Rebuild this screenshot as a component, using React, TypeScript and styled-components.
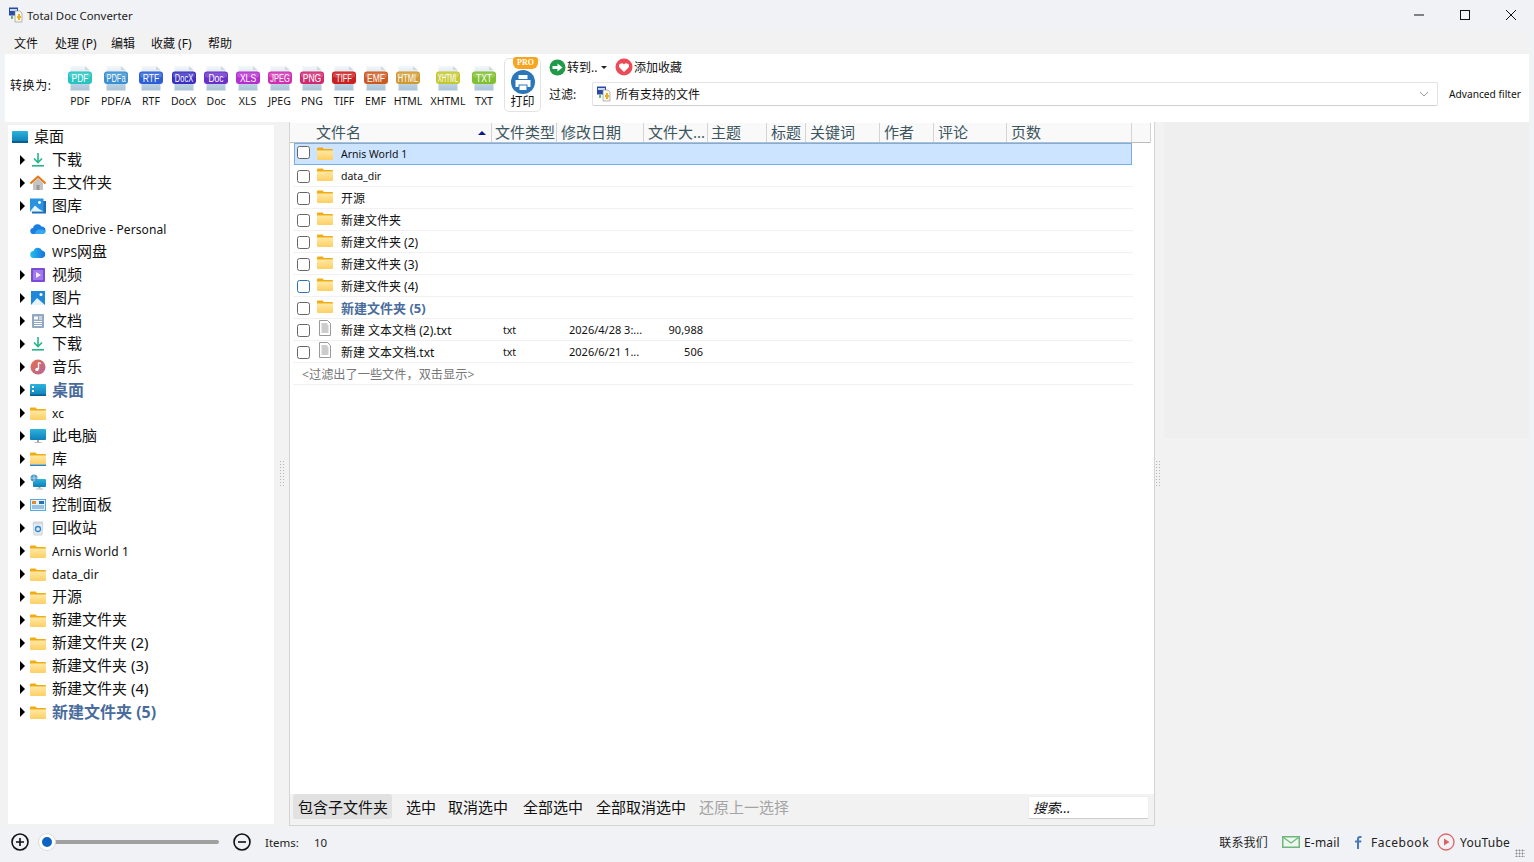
import React from "react";
import styled, { createGlobalStyle } from "styled-components";

const UI = `"Noto Sans", "Noto Sans CJK SC", sans-serif`;

const Global = createGlobalStyle`
  html, body { margin: 0; padding: 0; height: 100%; background: #f1f2f5; overflow: hidden; }
  body { font-family: ${UI}; color: #111; }
  * { box-sizing: border-box; }
`;

const Win = styled.div`
  width: 1534px; height: 862px; display: flex; flex-direction: column; background: #f1f2f5; overflow: hidden;
`;
const TitleBar = styled.div`
  height: 30px; flex: none; display: flex; align-items: center; padding-left: 9px;
`;
const TitleText = styled.span`
  font-size: 11.4px; color: #222; margin-left: 4px; white-space: nowrap;
`;
const WinButtons = styled.div`
  margin-left: auto; display: flex; align-items: center; height: 30px;
`;
const WinButton = styled.div`
  width: 46px; height: 30px; display: flex; align-items: center; justify-content: center;
`;
const MenuBar = styled.div`
  height: 24px; flex: none; margin-right: 5px; background: #f2f2f2; display: flex; align-items: center; padding: 2px 0 0 14px;
`;
const MenuItem = styled.span<{ $w: number }>`
  width: ${p => p.$w}px; font-size: 12px; color: #111; white-space: nowrap;
`;
const ToolBar = styled.div`
  height: 68px; flex: none; margin: 0 5px; background: #fff; display: flex; align-items: stretch; padding-left: 5px;
`;
const ConvertLabel = styled.div`
  width: 52px; font-size: 12px; letter-spacing: 0.6px; align-self: center; margin-bottom: 6px; white-space: nowrap; color: #111;
`;
const FormatButton = styled.div<{ $w: number }>`
  width: ${p => p.$w}px; display: flex; flex-direction: column; align-items: center; padding-top: 12px; flex: none;
`;
const FormatLabel = styled.span`
  font-size: 10.5px; line-height: 14px; margin-top: 3px; color: #151515; white-space: nowrap;
`;
const PrintButton = styled.div`
  position: relative; width: 37px; height: 54px; margin: 4px 0 0 6px; border: 1px solid #e3e3e3; border-radius: 5px;
  display: flex; flex-direction: column; align-items: center; padding-top: 11px; flex: none;
`;
const ProBadge = styled.span`
  position: absolute; top: -2px; right: 2px; width: 25px; height: 12px; border-radius: 3px 3px 6px 6px; background: #f7a520;
  color: #fff; font: bold 8px/12px "Liberation Serif", serif; text-align: center;
`;
const PrintLabel = styled.span`
  font-size: 12px; line-height: 15px; color: #111;
`;
const ToolRight = styled.div`
  flex: 1; display: flex; flex-direction: column; padding-left: 8px; min-width: 0;
`;
const ToolTop = styled.div`
  height: 26px; margin-bottom: 2px; display: flex; align-items: center; flex: none;
`;
const TopAction = styled.span<{ $w: number }>`
  width: ${p => p.$w}px; display: flex; align-items: center; gap: 1px; font-size: 12px; color: #111; white-space: nowrap;
`;
const Caret = styled.i`
  width: 0; height: 0; border-left: 3px solid transparent; border-right: 3px solid transparent; border-top: 3px solid #222; margin-left: 3px;
`;
const FilterRow = styled.div`
  display: flex; align-items: center; height: 24px;
`;
const FilterLabel = styled.span`
  width: 43px; font-size: 12px; color: #111; flex: none;
`;
const Combo = styled.div`
  width: 846px; height: 24px; display: flex; align-items: center; padding: 0 8px 0 4px; border: 1px solid #e3e3e3;
  border-bottom: 1px solid #cfcfcf; border-radius: 2px; font-size: 12px; gap: 5px; flex: none;
`;
const ComboArrow = styled.span`
  margin-left: auto; display: flex;
`;
const AdvFilter = styled.span`
  font-size: 10.2px; margin: -1px 0 0 11px; color: #111; white-space: nowrap;
`;

const Body = styled.div`
  height: 704px; flex: none; display: flex; margin-right: 5px; background: #f2f2f2;
`;
const Tree = styled.div`
  width: 266px; margin: 3px 0 2px 8px; background: #fff; flex: none;
`;
const TreeRow = styled.div<{ $root?: boolean }>`
  height: 23px; display: flex; align-items: center; padding-left: ${p => (p.$root ? 4 : 12)}px;
`;
const Arrow = styled.i<{ $show: boolean }>`
  width: 0; height: 0; flex: none; margin-right: 5px;
  border-top: 5px solid transparent; border-bottom: 5px solid transparent;
  border-left: 5px solid ${p => (p.$show ? "#000" : "transparent")};
`;
const TreeLabel = styled.span<{ $bold?: boolean; $latin?: boolean }>`
  margin: ${p => (p.$latin ? "2px 0 0 6px" : "-2px 0 0 6px")}; white-space: nowrap;
  font-size: ${p => (p.$latin ? 12 : p.$bold ? 16 : 15)}px;
  letter-spacing: ${p => (p.$latin ? 0.1 : 0)}px;
  font-weight: ${p => (p.$bold ? 700 : 400)};
  color: ${p => (p.$bold ? "#4a6c9c" : "#111")};
`;
const SmallLatin = styled.span`
  font-size: 12px;
`;
const Splitter = styled.div<{ $w: number; $start?: boolean }>`
  width: ${p => p.$w}px; flex: none; display: flex; align-items: flex-start;
  justify-content: ${p => (p.$start ? "flex-start" : "center")}; padding-top: 338px;
`;
const Grip = styled.div`
  width: 5px; height: 26px;
  background-image: radial-gradient(#b4b4b4 0.8px, transparent 1px);
  background-size: 3px 3px;
`;
const ListPanel = styled.div`
  width: 866px; height: 704px; flex: none; border: 1px solid #d4d4d4; border-top: none; display: flex; flex-direction: column; background: #fff;
`;
const HeaderRow = styled.div`
  height: 20px; flex: none; display: flex; background: #f9f9f9; margin-right: 3px; border-bottom: 1px solid #bdbdbd; border-right: 1px solid #d4d4d4; margin-top: 1px;
`;
const HeaderCell = styled.div<{ $w: number; $pad?: number }>`
  width: ${p => p.$w}px; flex: none; position: relative; height: 19px; display: flex; align-items: center;
  padding: 0 0 2px ${p => p.$pad ?? 4}px; font-size: 15px; color: #3c5660; white-space: nowrap; overflow: hidden;
  border-right: 1px solid #d4d4d4;
`;
const SortMark = styled.i`
  position: absolute; right: 5px; top: 8px; width: 0; height: 0;
  border-left: 4px solid transparent; border-right: 4px solid transparent; border-bottom: 4px solid #0a1a80;
`;
const Rows = styled.div`
  flex: 1; padding: 0 0 0 3px; min-height: 0; width: 843px;
`;
const FileRow = styled.div<{ $sel?: boolean }>`
  height: 22px; display: flex; align-items: center; font-size: 11px; color: #111;
  border-bottom: 1px solid ${p => (p.$sel ? "#76aee8" : "#f1f1f1")};
  ${p => p.$sel && "background: #cce4ff; border-top: 1px solid #76aee8; border-left: 1px solid #76aee8; border-right: 1px solid #76aee8; margin: 0 1px;"}
  padding-left: ${p => (p.$sel ? 2 : 4)}px;
`;
const Check = styled.i<{ $focus?: boolean; $top?: number }>`
  width: 13px; height: 13px; flex: none; border: 1px solid ${p => (p.$focus ? "#2e6fb5" : "#666")}; border-radius: 2.5px; background: #fff;
  margin-top: ${p => p.$top ?? 1}px;
`;
const IconSlot = styled.span`
  width: 16px; height: 16px; flex: none; margin: -3px 0 0 7px; display: flex;
`;
const NameCell = styled.span<{ $bold?: boolean; $small?: boolean }>`
  width: 162px; margin-left: 8px; flex: none; white-space: nowrap;
  font-size: ${p => (p.$small ? 10.5 : p.$bold ? 13 : 12)}px;
  font-weight: ${p => (p.$bold ? 700 : 400)};
  color: ${p => (p.$bold ? "#4a6c9c" : "#111")};
`;
const TypeCell = styled.span`
  width: 66px; flex: none; font-size: 10.5px;
`;
const DateCell = styled.span`
  width: 84px; flex: none; font-size: 11px; white-space: nowrap;
`;
const SizeCell = styled.span`
  width: 50px; flex: none; text-align: right; font-size: 11px;
`;
const FilteredNote = styled.div`
  height: 22px; display: flex; align-items: center; padding-left: 9px; font-size: 12.2px; color: #777; border-bottom: 1px solid #f1f1f1;
`;
const ListTools = styled.div`
  height: 31px; flex: none; display: flex; align-items: center; background: #f2f2f2; padding: 0 5px 6px 3px;
`;
const ToolBtn = styled.span<{ $w: number; $on?: boolean; $off?: boolean }>`
  width: ${p => p.$w}px; height: 25px; flex: none; display: flex; align-items: center; font-size: 15px; white-space: nowrap;
  color: ${p => (p.$off ? "#a4a4a4" : "#111")};
  border-radius: 3px;
  ${p => (p.$on ? "background: #e1e1e1; padding-left: 5px;" : "")}
`;
const Search = styled.div`
  margin: 2px 0 0 auto; width: 121px; height: 23px; background: #fff; border: 1px solid #eee; border-bottom: 1px solid #ccc; border-radius: 2px;
  font-size: 13.5px; font-style: italic; color: #111; display: flex; align-items: center; padding: 0 0 2px 4px;
`;
const Preview = styled.div`
  flex: 1; height: 316px; background: #efefef;
`;
const StatusBar = styled.div`
  flex: 1; display: flex; align-items: center; padding: 0 0 4px 11px; position: relative; font-size: 12px; color: #222;
`;
const SliderTrack = styled.div`
  width: 179px; height: 4px; background: #a0a0a0; border-radius: 2px; margin: 0 14px 0 11px; position: relative;
`;
const Knob = styled.i`
  position: absolute; left: -1px; top: -6px; width: 16px; height: 16px; border-radius: 50%; background: #0a64c4; border: 3px solid #fff; box-shadow: 0 0 0 1px #dcdcdc;
`;
const ItemsLabel = styled.span`
  margin-left: 14px; width: 49px; font-size: 11.5px;
`;
const ItemsCount = styled.span`
  font-size: 11.5px;
`;
const Contacts = styled.div`
  margin-left: auto; display: flex; align-items: center; padding-right: 24px; font-size: 12px; color: #222;
`;
const ContactText = styled.span<{ $ml: number; $ls?: number }>`
  margin-left: ${p => p.$ml}px; white-space: nowrap; letter-spacing: ${p => p.$ls ?? 0.2}px;
`;
const ResizeGrip = styled.div`
  position: absolute; right: 9px; bottom: 5px; width: 10px; height: 8px;
  background-image: radial-gradient(#8c8c8c 0.9px, transparent 1.1px); background-size: 3px 3px;
`;
const ContactIcon = styled.svg<{ $ml: number }>`
  margin-left: ${p => p.$ml}px; flex: none;
`;

const GradDefs = () => (
  <svg width="0" height="0" style={{ position: "absolute" }}>
    <defs>
      <linearGradient id="fold" x1="0" y1="0" x2="0" y2="1"><stop offset="0" stopColor="#ffe9a6" /><stop offset="1" stopColor="#fdcf62" /></linearGradient>
      <linearGradient id="blue" x1="0" y1="0" x2="0" y2="1"><stop offset="0" stopColor="#2bb3dd" /><stop offset="1" stopColor="#0e7fb8" /></linearGradient>
      <linearGradient id="page" x1="0" y1="0" x2="0" y2="1"><stop offset="0" stopColor="#f4f7fa" /><stop offset="1" stopColor="#a9c4d8" /></linearGradient>
      <linearGradient id="music" x1="0" y1="0" x2="1" y2="1"><stop offset="0" stopColor="#e8714a" /><stop offset="1" stopColor="#b2649c" /></linearGradient>
      <linearGradient id="cloud" x1="0" y1="0" x2="1" y2="0"><stop offset="0" stopColor="#22c0e8" /><stop offset="1" stopColor="#1a6fe0" /></linearGradient>
    </defs>
  </svg>
);

type Kind = "desktop" | "desktop2" | "down" | "home" | "gallery" | "one" | "wps" | "video" | "pic" | "doc" | "music" | "folder" | "pc" | "lib" | "net" | "cp" | "bin" | "txt";

const Ico = ({ k }: { k: Kind }) => {
  const s = { width: 16, height: 16, viewBox: "0 0 16 16" } as const;
  switch (k) {
    case "folder":
      return <svg {...s}><path d="M0 3.5a1 1 0 0 1 1-1h4.5l1.5 1.5h8a1 1 0 0 1 1 1v1H0z" fill="#f0ac14" /><path d="M0 5.5h16v8.5a1 1 0 0 1-1 1H1a1 1 0 0 1-1-1z" fill="url(#fold)" /></svg>;
    case "lib":
      return <svg {...s}><path d="M0 2.5a1 1 0 0 1 1-1h4.5L7 3h8a1 1 0 0 1 1 1v1H0z" fill="#f0ac14" /><path d="M0 4.5h16v9H0z" fill="url(#fold)" /><rect y="13.5" width="16" height="1.5" fill="#2a86c8" /></svg>;
    case "desktop":
      return <svg {...s}><rect y="2" width="16" height="11" rx="1" fill="url(#blue)" /><rect y="12" width="16" height="2" fill="#0b5f8e" /></svg>;
    case "desktop2":
      return <svg {...s}><rect y="2" width="16" height="12" rx="1" fill="url(#blue)" /><rect y="12.5" width="16" height="1.5" fill="#0b5f8e" /><rect x="2" y="4" width="2" height="2" fill="#fff" /><rect x="2" y="8" width="2" height="2" fill="#fff" /></svg>;
    case "down":
      return <svg {...s}><path d="M8 1v9M4 6.5 8 10.5 12 6.5" stroke="#26b58c" strokeWidth="1.6" fill="none" /><rect x="2" y="13" width="12" height="1.6" fill="#26b58c" /></svg>;
    case "home":
      return <svg {...s}><path d="M3 8v7h10V8L8 3z" fill="#c4c4c4" /><rect x="6.5" y="10" width="3" height="5" fill="#999" /><path d="M0.5 8.5 8 1.5l7.5 7" stroke="#e87512" strokeWidth="2" fill="none" /></svg>;
    case "gallery":
      return <svg {...s}><rect x="2" y="3" width="14" height="12.5" fill="#1f6db3" /><rect x="0" y="0.5" width="13.5" height="13" fill="#2a93e0" /><path d="M0 13.5 5 7.5l4 3.5 4.5 2.5z" fill="#e6f3fc" /><circle cx="9.5" cy="4.5" r="1.4" fill="#fff" /></svg>;
    case "pic":
      return <svg {...s}><rect x="1" y="1" width="14" height="14" fill="#1f88d8" /><path d="M1 15 7 8l8 7z" fill="#e8f4fc" /><circle cx="11" cy="4.5" r="1.5" fill="#fff" /></svg>;
    case "one":
      return <svg {...s}><path d="M3.5 13a3 3 0 0 1-.4-6 4.5 4.5 0 0 1 8.4-1.5A3.8 3.8 0 0 1 15.5 9.5 3.5 3.5 0 0 1 12.5 13z" fill="#1b7ee0" /><path d="M5 13c0-3 3-5 6-4.5s5 1.5 4.5 2.5-1.5 2-3 2z" fill="#37a8ee" /></svg>;
    case "wps":
      return <svg {...s}><path d="M4 14a3.5 3.5 0 0 1-.5-7 4.5 4.5 0 0 1 8.5-.5A3.8 3.8 0 0 1 12 14z" fill="url(#cloud)" /></svg>;
    case "video":
      return <svg {...s}><rect x="1" y="1" width="14" height="14" rx="1" fill="#7a4ad8" /><rect x="3" y="3" width="10" height="10" fill="#a07ae8" /><path d="M6 5v6l5-3z" fill="#f2ecff" /></svg>;
    case "doc":
      return <svg {...s}><rect x="2" y="1" width="12" height="14" rx="1" fill="#90a8c4" /><rect x="4" y="3.5" width="4" height="3" fill="#fff" /><path d="M9 4h3M9 6h3M4 8.5h8M4 10.5h8M4 12.5h8" stroke="#fff" strokeWidth="1" /></svg>;
    case "music":
      return <svg {...s}><circle cx="8" cy="8" r="7.5" fill="url(#music)" /><path d="M8.5 3.5v6.5M8.5 3.5l2.5 1" stroke="#fff" strokeWidth="1.3" fill="none" /><circle cx="7" cy="10.5" r="1.7" fill="#fff" /></svg>;
    case "pc":
      return <svg {...s}><rect x="0" y="1" width="16" height="11" rx="1" fill="url(#blue)" /><rect x="7" y="12" width="2" height="2" fill="#9aa" /><rect x="4.5" y="14" width="7" height="1" fill="#bbb" /></svg>;
    case "net":
      return <svg {...s}><rect x="3" y="5" width="13" height="8" rx="1" fill="url(#blue)" /><rect x="8.5" y="13" width="2" height="1.5" fill="#9aa" /><rect x="6" y="14.5" width="7" height="1" fill="#bbb" /><circle cx="4" cy="4" r="3.5" fill="#4a94c8" /><path d="M.5 4h7M4 .5v7" stroke="#d8ecf8" strokeWidth=".7" /></svg>;
    case "cp":
      return <svg {...s}><rect x="0" y="2" width="16" height="12" fill="#5aa8de" /><rect x="1" y="3" width="14" height="10" fill="#e4f2fb" /><rect x="2" y="4" width="4" height="3" fill="#e88a20" /><rect x="9" y="4" width="5" height="3" fill="#2a6fb0" /><path d="M2 9h12M2 11h12" stroke="#4a90c8" strokeWidth="1" /></svg>;
    case "bin":
      return <svg {...s}><path d="M3 3h10l-1 12H4z" fill="#e4e9ee" stroke="#c0c8d0" strokeWidth=".7" /><rect x="3" y="1.5" width="10" height="2" fill="#cfd6dc" /><circle cx="8" cy="9" r="2.5" fill="none" stroke="#2a8ad8" strokeWidth="1.3" /></svg>;
    case "txt":
      return <svg {...s}><path d="M2.5.5h8l3 3v12h-11z" fill="#fff" stroke="#9a9a9a" /><path d="M4.5 4h6M4.5 6h7M4.5 8h7M4.5 10h7M4.5 12h7" stroke="#9a9a9a" strokeWidth="1" /></svg>;
  }
};

const AppGlyph = () => (
  <svg width="14" height="16" viewBox="0 0 14 16" style={{ flex: "none" }}>
    <rect x="0" y="0.5" width="9" height="8" fill="#2a4aa8" />
    <rect x="1" y="2" width="7" height="2" fill="#c6d8f4" />
    <path d="M6 4h5l2 2v9H6z" fill="#f7f7ee" stroke="#8a8a80" strokeWidth=".6" />
    <path d="M10 7v6M8 10h4" stroke="#e8b020" strokeWidth="2" />
    <path d="M3 9v3" stroke="#2a9a4a" strokeWidth="1.4" />
  </svg>
);

const FormatIcon = ({ band, color }: { band: string; color: string }) => {
  const sx = band.length >= 5 ? 0.55 : band.length === 4 ? 0.68 : 0.78;
  return (
    <svg width="26" height="25" viewBox="0 0 26 25">
      <path d="M3.5 0h14.5l4.5 4v20.5h-19z" fill="url(#page)" />
      <path d="M18 0v4h4.5z" fill="#cfd9e2" />
      <rect x="1" y="5.5" width="24" height="12.5" rx="3" fill={color} />
      <rect x="2" y="6.5" width="22" height="5" rx="2" fill="#fff" opacity=".18" />
      <text transform={`translate(13 15.8) scale(${sx} 1)`} textAnchor="middle" fontFamily='"Liberation Sans", sans-serif' fontSize="11" fill="#fff">{band}</text>
    </svg>
  );
};

const formats = [
  { l: "PDF", b: "PDF", c: "#28c4c2", w: 36 }, { l: "PDF/A", b: "PDFa", c: "#3a90d0", w: 36 },
  { l: "RTF", b: "RTF", c: "#2b5fd6", w: 34 }, { l: "DocX", b: "DocX", c: "#3a2fc0", w: 31 },
  { l: "Doc", b: "Doc", c: "#6a30c8", w: 34 }, { l: "XLS", b: "XLS", c: "#b52fd0", w: 29 },
  { l: "JPEG", b: "JPEG", c: "#d030b0", w: 35 }, { l: "PNG", b: "PNG", c: "#d02a70", w: 30 },
  { l: "TIFF", b: "TIFF", c: "#cc2020", w: 34 }, { l: "EMF", b: "EMF", c: "#cc5a20", w: 29 },
  { l: "HTML", b: "HTML", c: "#d09a30", w: 36 }, { l: "XHTML", b: "XHTML", c: "#c4c830", w: 44 },
  { l: "TXT", b: "TXT", c: "#80c030", w: 28 },
];

const treeItems: { t: React.ReactNode; k: Kind; a?: boolean; bold?: boolean; latin?: boolean }[] = [
  { t: "下载", k: "down", a: true }, { t: "主文件夹", k: "home", a: true }, { t: "图库", k: "gallery", a: true },
  { t: "OneDrive - Personal", k: "one", latin: true }, { t: <><SmallLatin>WPS</SmallLatin>网盘</>, k: "wps" },
  { t: "视频", k: "video", a: true }, { t: "图片", k: "pic", a: true }, { t: "文档", k: "doc", a: true },
  { t: "下载", k: "down", a: true }, { t: "音乐", k: "music", a: true }, { t: "桌面", k: "desktop2", a: true, bold: true },
  { t: "xc", k: "folder", a: true, latin: true }, { t: "此电脑", k: "pc", a: true }, { t: "库", k: "lib", a: true },
  { t: "网络", k: "net", a: true }, { t: "控制面板", k: "cp", a: true }, { t: "回收站", k: "bin", a: true },
  { t: "Arnis World 1", k: "folder", a: true, latin: true }, { t: "data_dir", k: "folder", a: true, latin: true },
  { t: "开源", k: "folder", a: true }, { t: "新建文件夹", k: "folder", a: true }, { t: "新建文件夹 (2)", k: "folder", a: true },
  { t: "新建文件夹 (3)", k: "folder", a: true }, { t: "新建文件夹 (4)", k: "folder", a: true },
  { t: "新建文件夹 (5)", k: "folder", a: true, bold: true },
];

const cols: { t: string; w: number; pad?: number }[] = [
  { t: "文件类型", w: 65, pad: 3 }, { t: "修改日期", w: 87 }, { t: "文件大...", w: 64 }, { t: "主题", w: 59, pad: 3 },
  { t: "标题", w: 39 }, { t: "关键词", w: 74 }, { t: "作者", w: 54 }, { t: "评论", w: 73 }, { t: "页数", w: 125 },
];

const files: { n: string; k: Kind; sel?: boolean; small?: boolean; focus?: boolean; bold?: boolean; ty?: string; d?: string; s?: string }[] = [
  { n: "Arnis World 1", k: "folder", sel: true, small: true },
  { n: "data_dir", k: "folder", small: true },
  { n: "开源", k: "folder" },
  { n: "新建文件夹", k: "folder" },
  { n: "新建文件夹 (2)", k: "folder" },
  { n: "新建文件夹 (3)", k: "folder" },
  { n: "新建文件夹 (4)", k: "folder", focus: true },
  { n: "新建文件夹 (5)", k: "folder", bold: true },
  { n: "新建 文本文档 (2).txt", k: "txt", ty: "txt", d: "2026/4/28 3:...", s: "90,988" },
  { n: "新建 文本文档.txt", k: "txt", ty: "txt", d: "2026/6/21 1...", s: "506" },
];

const tools = [
  { t: "选中", w: 42 }, { t: "取消选中", w: 75 }, { t: "全部选中", w: 73 }, { t: "全部取消选中", w: 103 },
];

export default function App() {
  return (
    <Win>
      <Global />
      <GradDefs />
      <TitleBar>
        <AppGlyph />
        <TitleText>Total Doc Converter</TitleText>
        <WinButtons>
          <WinButton><svg width="10" height="10" viewBox="0 0 10 10"><path d="M0 5h10" stroke="#111" /></svg></WinButton>
          <WinButton><svg width="10" height="10" viewBox="0 0 10 10"><rect x=".5" y=".5" width="9" height="9" fill="none" stroke="#111" /></svg></WinButton>
          <WinButton><svg width="10" height="10" viewBox="0 0 10 10"><path d="M0 0l10 10M10 0 0 10" stroke="#111" /></svg></WinButton>
        </WinButtons>
      </TitleBar>
      <MenuBar>
        <MenuItem $w={41}>文件</MenuItem>
        <MenuItem $w={56}>处理 (P)</MenuItem>
        <MenuItem $w={40}>编辑</MenuItem>
        <MenuItem $w={57}>收藏 (F)</MenuItem>
        <MenuItem $w={30}>帮助</MenuItem>
      </MenuBar>
      <ToolBar>
        <ConvertLabel>转换为:</ConvertLabel>
        {formats.map(f => (
          <FormatButton key={f.l} $w={f.w}>
            <FormatIcon band={f.b} color={f.c} />
            <FormatLabel>{f.l}</FormatLabel>
          </FormatButton>
        ))}
        <PrintButton>
          <ProBadge>PRO</ProBadge>
          <svg width="24" height="24" viewBox="0 0 24 24">
            <circle cx="12" cy="12" r="12" fill="#2a76b8" />
            <path d="M7.5 5h9v4h-9z" fill="#fff" />
            <path d="M4.5 10h15v7h-3v-2.5h-9V17h-3z" fill="#fff" />
            <rect x="8.5" y="15.5" width="7" height="4.5" fill="#fff" />
          </svg>
          <PrintLabel>打印</PrintLabel>
        </PrintButton>
        <ToolRight>
          <ToolTop>
            <TopAction $w={66}>
              <svg width="17" height="17" viewBox="0 0 17 17"><circle cx="8.5" cy="8.5" r="8" fill="#1f9a48" /><path d="M3.5 7h5V4.5l5 4-5 4V10h-5z" fill="#fff" /></svg>
              转到..<Caret />
            </TopAction>
            <TopAction $w={80}>
              <svg width="18" height="18" viewBox="0 0 18 18"><circle cx="9" cy="9" r="8.5" fill="#ec4a58" /><path d="M9 14 4.5 9.5a2.6 2.6 0 0 1 4.5-3 2.6 2.6 0 0 1 4.5 3z" fill="#fff" /></svg>
              添加收藏
            </TopAction>
          </ToolTop>
          <FilterRow>
            <FilterLabel>过滤:</FilterLabel>
            <Combo>
              <AppGlyph />
              所有支持的文件
              <ComboArrow><svg width="10" height="6" viewBox="0 0 10 6"><path d="M1 1l4 4 4-4" fill="none" stroke="#999" /></svg></ComboArrow>
            </Combo>
            <AdvFilter>Advanced filter</AdvFilter>
          </FilterRow>
        </ToolRight>
      </ToolBar>
      <Body>
        <Tree>
          <TreeRow $root>
            <Ico k="desktop" />
            <TreeLabel>桌面</TreeLabel>
          </TreeRow>
          {treeItems.map((it, i) => (
            <TreeRow key={i}>
              <Arrow $show={!!it.a} />
              <Ico k={it.k} />
              <TreeLabel $bold={it.bold} $latin={it.latin}>{it.t}</TreeLabel>
            </TreeRow>
          ))}
        </Tree>
        <Splitter $w={15}><Grip /></Splitter>
        <ListPanel>
          <HeaderRow>
            <HeaderCell $w={202} $pad={26}>文件名<SortMark /></HeaderCell>
            {cols.map(c => <HeaderCell key={c.t} $w={c.w} $pad={c.pad}>{c.t}</HeaderCell>)}
          </HeaderRow>
          <Rows>
            {files.map(f => (
              <FileRow key={f.n} $sel={f.sel}>
                <Check $focus={f.focus} $top={f.sel ? -3 : 1} />
                <IconSlot><Ico k={f.k} /></IconSlot>
                <NameCell $bold={f.bold} $small={f.small}>{f.n}</NameCell>
                <TypeCell>{f.ty}</TypeCell>
                <DateCell>{f.d}</DateCell>
                <SizeCell>{f.s}</SizeCell>
              </FileRow>
            ))}
            <FilteredNote>&lt;过滤出了一些文件，双击显示&gt;</FilteredNote>
          </Rows>
          <ListTools>
            <ToolBtn $on $w={99}>包含子文件夹</ToolBtn>
            <ToolBtn $w={14} />
            {tools.map(t => <ToolBtn key={t.t} $w={t.w}>{t.t}</ToolBtn>)}
            <ToolBtn $off $w={95}>还原上一选择</ToolBtn>
            <Search>搜索...</Search>
          </ListTools>
        </ListPanel>
        <Splitter $w={9} $start><Grip /></Splitter>
        <Preview />
      </Body>
      <StatusBar>
        <svg width="18" height="18" viewBox="0 0 18 18"><circle cx="9" cy="9" r="8" fill="none" stroke="#111" strokeWidth="1.6" /><path d="M5 9h8M9 5v8" stroke="#111" strokeWidth="1.6" /></svg>
        <SliderTrack><Knob /></SliderTrack>
        <svg width="18" height="18" viewBox="0 0 18 18"><circle cx="9" cy="9" r="8" fill="none" stroke="#111" strokeWidth="1.6" /><path d="M5 9h8" stroke="#111" strokeWidth="1.6" /></svg>
        <ItemsLabel>Items:</ItemsLabel>
        <ItemsCount>10</ItemsCount>
        <Contacts>
          <ContactText $ml={0}>联系我们</ContactText>
          <ContactIcon $ml={14} width="18" height="12" viewBox="0 0 18 12"><rect width="18" height="12" fill="#6db77a" /><rect x="1.5" y="1.5" width="15" height="9" fill="#eef7ef" /><path d="M1.5 1.5 9 7l7.5-5.5" fill="none" stroke="#6db77a" strokeWidth="1.3" /></ContactIcon>
          <ContactText $ml={4}>E-mail</ContactText>
          <ContactIcon $ml={14} width="8" height="13" viewBox="0 0 8 13"><path d="M3 13V6.5H1V4.5h2V3c0-2 1-3 3-3h1.5v2H6.5C5.5 2 5 2.3 5 3.2v1.3h2.5L7 6.5H5V13z" fill="#4a78b8" /></ContactIcon>
          <ContactText $ml={9} $ls={0.55}>Facebook</ContactText>
          <ContactIcon $ml={8} width="18" height="18" viewBox="0 0 18 18"><circle cx="9" cy="9" r="8" fill="none" stroke="#dc6464" strokeWidth="1.3" /><path d="M7 5.5v7l5.5-3.5z" fill="#dc6464" /></ContactIcon>
          <ContactText $ml={5}>YouTube</ContactText>
        </Contacts>
        <ResizeGrip />
      </StatusBar>
    </Win>
  );
}
